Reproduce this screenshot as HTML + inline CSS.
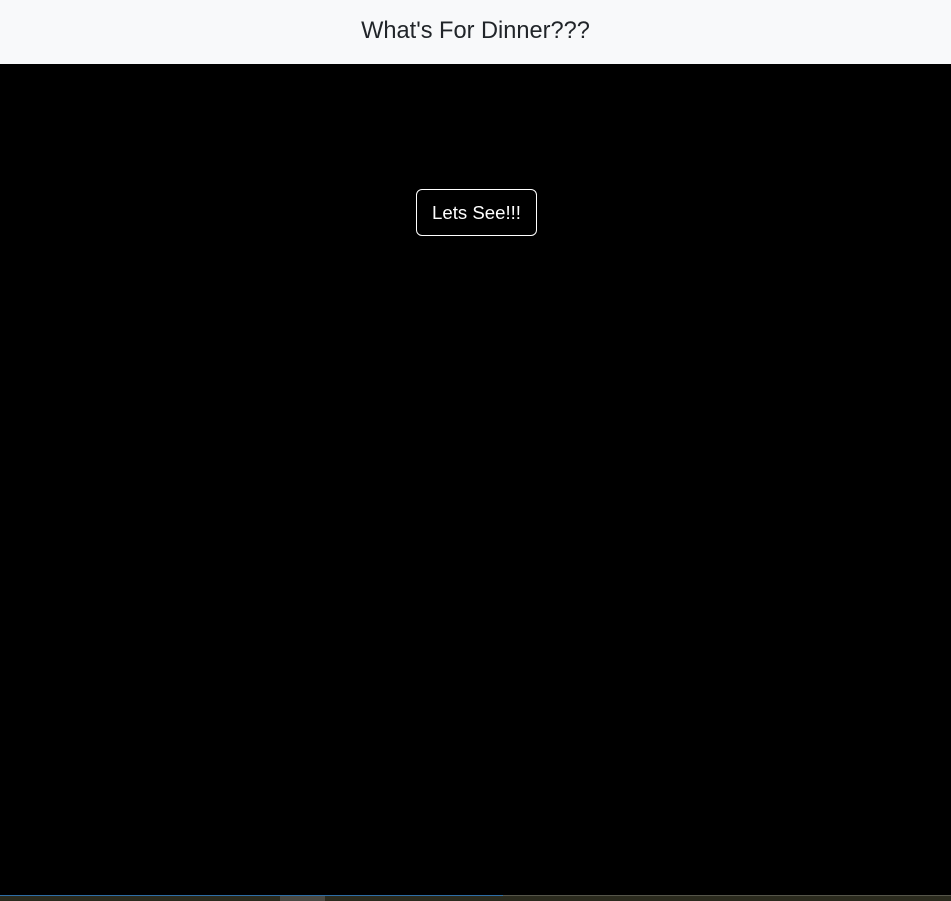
<!DOCTYPE html>
<html><head><style>
html,body{margin:0;padding:0;width:951px;height:901px;overflow:hidden;background:#000;font-family:"Segoe UI","Liberation Sans",sans-serif;}
.hdr{position:absolute;left:0;top:0;width:951px;height:64px;background:#f8f9fa;text-align:center;line-height:62px;font-size:23.6px;color:#212529;}
.btn{position:absolute;left:416px;top:189px;width:119px;height:45px;border:1px solid #fff;border-radius:6px;color:#fff;font-size:18.6px;text-align:center;line-height:46px;box-sizing:content-box;}
.bar{position:absolute;left:0;top:896px;width:951px;height:5px;background:#2b2b1e;}
.line{position:absolute;left:0;top:895px;width:503px;height:1px;background:#2e6ea6;}
.line2{position:absolute;left:503px;top:895px;width:448px;height:1px;background:#55554a;}
.thumb{position:absolute;left:280px;top:896px;width:45px;height:5px;background:#4a4a44;}
</style></head><body>
<div class="hdr">What's For Dinner???</div>
<div class="btn">Lets See!!!</div>
<div class="bar"></div><div class="line"></div><div class="line2"></div><div class="thumb"></div>
</body></html>
